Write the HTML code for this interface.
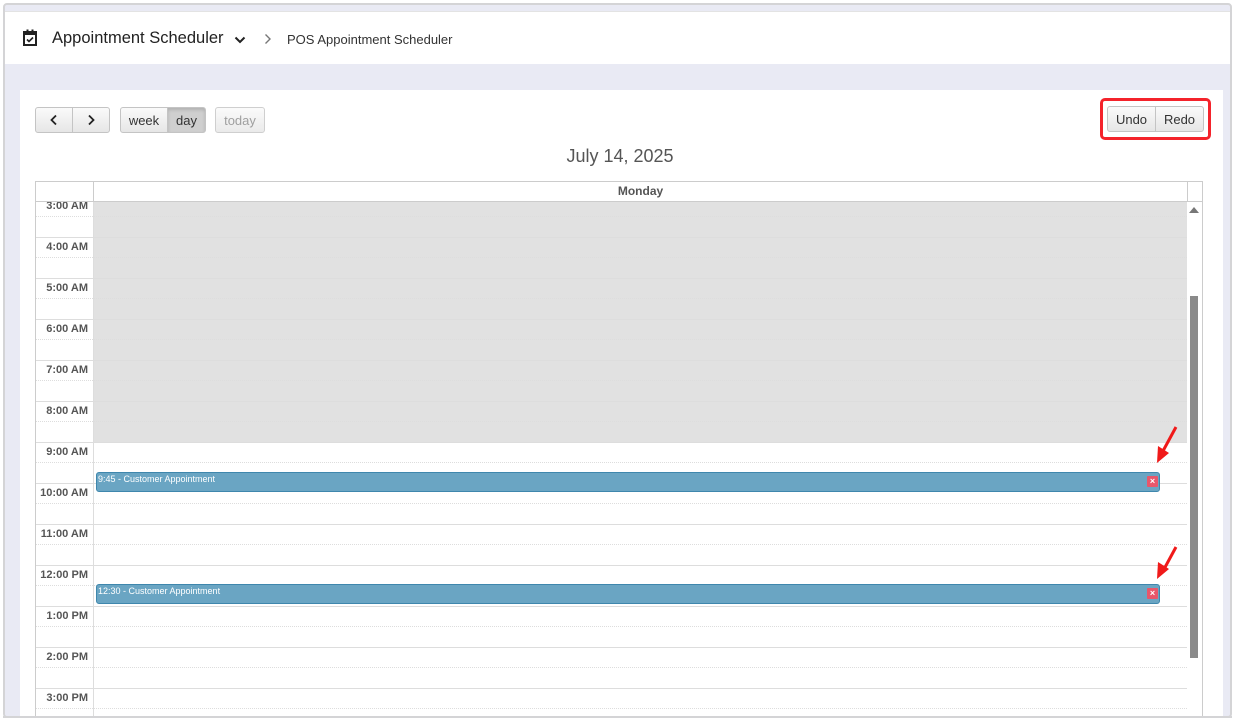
<!DOCTYPE html>
<html style="height:721px;overflow:hidden"><head><style>
*{box-sizing:border-box;margin:0;padding:0}
body{width:1235px;height:721px;background:#fff;font-family:"Liberation Sans",Arial,sans-serif;position:relative;overflow:hidden}
.frame{position:absolute;left:3px;top:3px;width:1229px;height:715px;border:2px solid #d4d4d6;border-radius:4px;background:#e9eaf4;overflow:hidden}
.hdr{position:absolute;left:0;top:6px;width:100%;height:53px;background:#fff;border-top:1px solid #e3e3e3}
.abs{position:absolute}
.btn{position:absolute;height:26px;border:1px solid #c4c4c4;background:linear-gradient(#fafafa,#e6e6e6);font-size:13px;color:#333;display:flex;align-items:center;justify-content:center;border-radius:3px}
.lbl{position:absolute;left:0;width:52px;text-align:right;font-size:11px;font-weight:bold;color:#555}
.ev{position:absolute;left:96px;width:1064px;height:20px;background:#6aa5c3;border:1px solid #3f87ad;border-radius:3px;color:#fff;font-size:9px;padding:1px 0 0 1px}
.x{position:absolute;right:1px;top:3px;width:11px;height:11px;background:#e8576b;color:#fff;font-size:9px;line-height:11px;text-align:center;font-weight:bold;border-radius:1px}
</style></head><body>
<div class="frame">
<div class="hdr">
<svg class="abs" style="left:17px;top:17px" width="16" height="18" viewBox="0 0 16 18"><rect x="2" y="3" width="12" height="13" fill="none" stroke="#222" stroke-width="2"/><rect x="2" y="3" width="12" height="3" fill="#222"/><rect x="4.5" y="0.5" width="2" height="4" fill="#222"/><rect x="9.5" y="0.5" width="2" height="4" fill="#222"/><path d="M5 10.5l2 2 4-4" stroke="#222" stroke-width="1.6" fill="none"/></svg>
<div class="abs" style="left:47px;top:17px;font-size:16.5px;color:#222">Appointment Scheduler</div>
<svg class="abs" style="left:229px;top:24px" width="12" height="8"><path d="M1.5 1.5l4.5 4.5 4.5-4.5" stroke="#222" stroke-width="2" fill="none"/></svg>
<svg class="abs" style="left:259px;top:21px" width="8" height="12"><path d="M1.5 1.5l4.5 4.5-4.5 4.5" stroke="#777" stroke-width="1.4" fill="none"/></svg>
<div class="abs" style="left:282px;top:20px;font-size:13px;color:#333">POS Appointment Scheduler</div>
</div>
<div class="abs" style="left:15px;top:85px;width:1203px;height:640px;background:#fff"></div>
</div>
<div class="btn" style="left:35px;top:107px;width:38px;border-radius:3px 0 0 3px"><svg width="10" height="12"><path d="M7 1.5L2.5 6 7 10.5" stroke="#222" stroke-width="1.8" fill="none"/></svg></div>
<div class="btn" style="left:72px;top:107px;width:38px;border-radius:0 3px 3px 0"><svg width="10" height="12"><path d="M3 1.5L7.5 6 3 10.5" stroke="#222" stroke-width="1.8" fill="none"/></svg></div>
<div class="btn" style="left:120px;top:107px;width:48px;border-radius:3px 0 0 3px">week</div>
<div class="btn" style="left:167px;top:107px;width:39px;border-radius:0 3px 3px 0;background:#cfcfcf;box-shadow:inset 0 2px 3px rgba(0,0,0,.15)">day</div>
<div class="btn" style="left:215px;top:107px;width:50px;color:#888;opacity:.8">today</div>
<div class="abs" style="left:1100px;top:98px;width:111px;height:42px;border:3px solid #f4232b;border-radius:5px"></div>
<div class="btn" style="left:1107px;top:106px;width:49px;border-radius:3px 0 0 3px">Undo</div>
<div class="btn" style="left:1155px;top:106px;width:49px;border-radius:0 3px 3px 0">Redo</div>
<div class="abs" style="left:0;width:1240px;top:146px;text-align:center;font-size:18px;color:#555">July 14, 2025</div>
<div class="abs" style="left:35px;top:181px;width:1168px;height:536px;border:1px solid #ccc;border-bottom:none;overflow:hidden">
<div class="abs" style="left:57px;top:0;width:1094px;height:20px;border-left:1px solid #ccc;text-align:center;font-size:12px;font-weight:bold;color:#555;line-height:19px">Monday</div>
<div class="abs" style="left:1151px;top:0;width:1px;height:20px;background:#ccc"></div>
<div class="abs" style="left:0;top:19px;width:1168px;height:1px;background:#ccc"></div>
<div class="abs" style="left:0;top:20px;width:1151px;height:540px;overflow:hidden">
<div class="abs" style="left:58px;top:0;width:1093px;height:240px;background:#e1e1e1"></div>
<div class="abs" style="left:57px;top:0;width:1px;height:540px;background:#ddd"></div>
<div id="rows"></div>
</div>
</div>
<div class="abs" style="left:0;top:717px;width:1235px;height:4px;background:#fff"></div>
<div class="abs" style="left:3px;top:716px;width:1229px;height:2px;background:#d4d4d6"></div>
<div class="abs" style="left:1190px;top:296px;width:8px;height:362px;background:#8a8a8a"></div>
<svg class="abs" style="left:1189px;top:206px" width="10" height="8"><path d="M0 7L5 1 10 7z" fill="#777"/></svg>
<div class="ev" style="top:472px">9:45 - Customer Appointment<div class="x">×</div></div>
<div class="ev" style="top:584px">12:30 - Customer Appointment<div class="x">×</div></div>
<svg class="abs" style="left:1152px;top:425px" width="28" height="40"><path d="M24 2L11 26" stroke="#f01a1a" stroke-width="3"/><path d="M5 38L6 21 17 28z" fill="#f01a1a"/></svg>
<svg class="abs" style="left:1152px;top:545px" width="28" height="40"><path d="M24 2L11 26" stroke="#f01a1a" stroke-width="3"/><path d="M5 34L6 17 17 24z" fill="#f01a1a"/></svg>
<script>
var r=document.getElementById('rows'),h='';
var names=['3:00 AM','4:00 AM','5:00 AM','6:00 AM','7:00 AM','8:00 AM','9:00 AM','10:00 AM','11:00 AM','12:00 PM','1:00 PM','2:00 PM','3:00 PM','4:00 PM'];
for(var i=0;i<14;i++){var y=-6+41*i;
h+='<div class="abs" style="left:0;top:'+y+'px;width:1151px;height:1px;background:#ddd"></div>';
h+='<div class="abs" style="left:0;top:'+(y+20)+'px;width:1151px;height:0;border-top:1px dotted #ddd"></div>';
h+='<div class="lbl" style="top:'+(y+4)+'px">'+names[i]+'</div>';}
r.innerHTML=h;
</script>
</body></html>
